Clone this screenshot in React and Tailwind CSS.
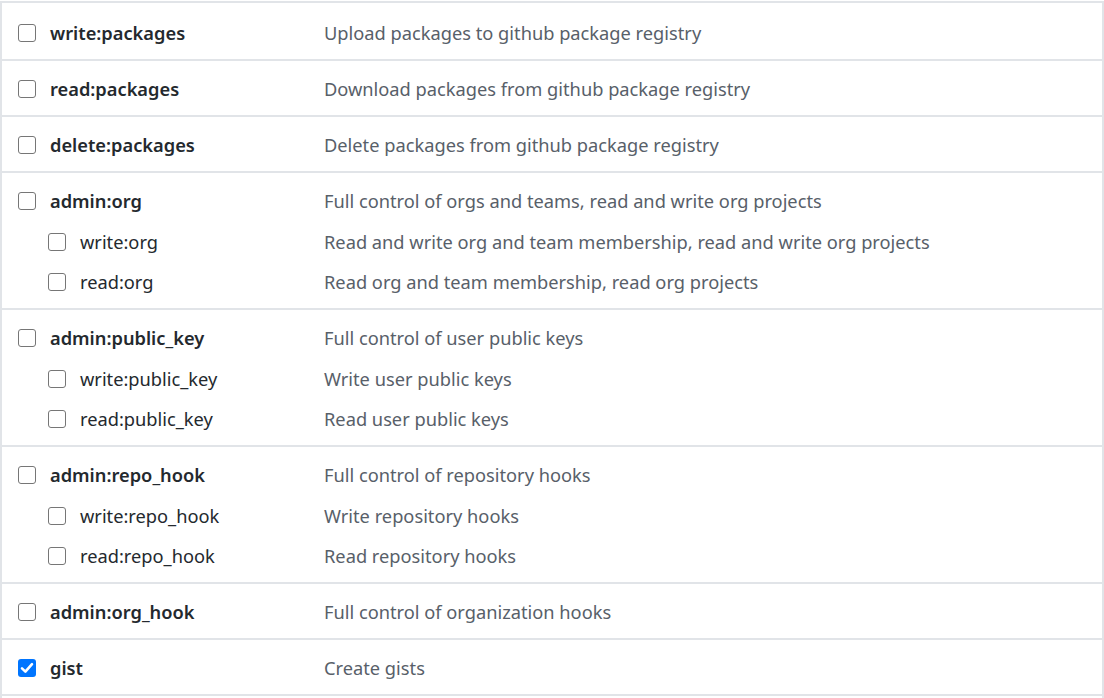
import React from "react";

const GROUPS = [
  { name: "write:packages", desc: "Upload packages to github package registry" },
  { name: "read:packages", desc: "Download packages from github package registry" },
  { name: "delete:packages", desc: "Delete packages from github package registry" },
  {
    name: "admin:org",
    desc: "Full control of orgs and teams, read and write org projects",
    subs: [
      { name: "write:org", desc: "Read and write org and team membership, read and write org projects" },
      { name: "read:org", desc: "Read org and team membership, read org projects" },
    ],
  },
  {
    name: "admin:public_key",
    desc: "Full control of user public keys",
    subs: [
      { name: "write:public_key", desc: "Write user public keys" },
      { name: "read:public_key", desc: "Read user public keys" },
    ],
  },
  {
    name: "admin:repo_hook",
    desc: "Full control of repository hooks",
    subs: [
      { name: "write:repo_hook", desc: "Write repository hooks" },
      { name: "read:repo_hook", desc: "Read repository hooks" },
    ],
  },
  { name: "admin:org_hook", desc: "Full control of organization hooks" },
  { name: "gist", desc: "Create gists", checked: true },
];

function Box({ checked }) {
  if (checked) {
    return (
      <span className="flex items-center justify-center w-[18px] h-[18px] rounded-[3px] bg-[#0075ff] shrink-0">
        <svg width="16" height="16" viewBox="0 0 16 16" fill="none">
          <path d="M3 8.4 L6.4 11.6 L13 4.2" stroke="white" strokeWidth="2.6" strokeLinecap="round" strokeLinejoin="round" />
        </svg>
      </span>
    );
  }
  return <span className="block w-[18px] h-[18px] rounded-[3px] border border-[#767676] bg-white shrink-0" />;
}

function Line({ item, sub }) {
  return (
    <div className={`flex items-center h-[28px] ${sub ? "mt-[12.5px]" : ""}`}>
      <div className={`flex items-center shrink-0 w-[306px] ${sub ? "pl-[30px]" : ""}`}>
        <Box checked={item.checked} />
        <span className={`ml-[14px] ${sub ? "font-normal" : "font-semibold"} text-[#24292e]`}>{item.name}</span>
      </div>
      <span className="text-[#586069]">{item.desc}</span>
    </div>
  );
}

export default function App() {
  return (
    <div className="bg-white pt-px" style={{ fontFamily: "'Noto Sans', 'Open Sans', sans-serif" }}>
      <div className="border-x-2 border-[#e1e4e8] text-[18.25px] leading-[28px]">
        {GROUPS.map((g, i) => (
          <div key={g.name} className={`border-t-2 border-[#e1e4e8] pl-[16px] pb-[12px] ${i === 0 ? "pt-[16px]" : "pt-[14px]"}`}>
            <Line item={g} />
            {g.subs && g.subs.map((s) => <Line key={s.name} item={s} sub />)}
          </div>
        ))}
        <div className="border-t-2 border-[#e1e4e8] h-[20px]" />
      </div>
    </div>
  );
}
